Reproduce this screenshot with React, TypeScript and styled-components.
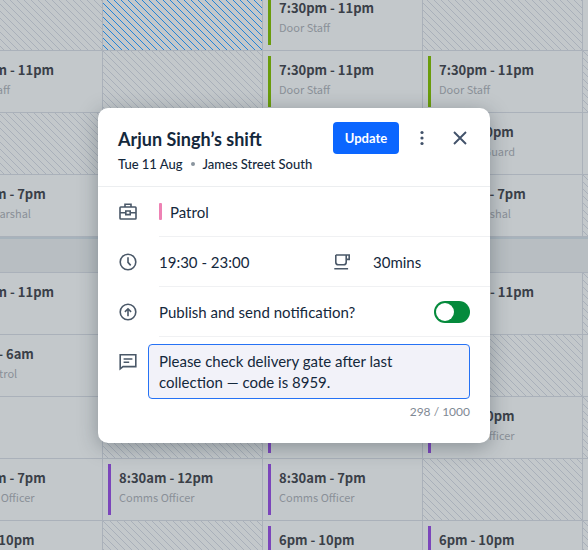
import React, { useState } from "react";
import styled, { createGlobalStyle } from "styled-components";

const GlobalStyle = createGlobalStyle`
  *, *::before, *::after { box-sizing: border-box; }
  html, body, #root { height: 100%; }
  body {
    margin: 0;
    overflow: hidden;
    background: #c3c8cd;
    font-family: Lato, sans-serif;
    color: #14283c;
  }
`;

const COLORS = { green: "#6a9c0c", purple: "#7b45bb" };

type ShiftData = {
  time: string;
  role?: string;
  bar: keyof typeof COLORS;
};
type CellData = ShiftData | "off" | "selected" | "empty";

const shift = (time: string, role: string | undefined, bar: keyof typeof COLORS): ShiftData => ({ time, role, bar });

const UPPER: CellData[][] = [
  ["off", "selected", shift("7:30pm - 11pm", "Door Staff", "green"), "off", "empty"],
  [shift("7:30pm - 11pm", "Door Staff", "green"), "off", shift("7:30pm - 11pm", "Door Staff", "green"), shift("7:30pm - 11pm", "Door Staff", "green"), "off"],
  ["off", "off", "empty", shift("6am - 10pm", "Security Guard", "green"), "empty"],
  [shift("8:30am - 7pm", "Event Marshal", "green"), "empty", "empty", shift("8:30am - 7pm", "Event Marshal", "green"), "off"],
];

const LOWER: CellData[][] = [
  [shift("7:30pm - 11pm", undefined, "purple"), "empty", "empty", shift("7:30pm - 11pm", undefined, "purple"), "off"],
  [shift("10pm - 6am", "Door Patrol", "purple"), "empty", "empty", "off", "empty"],
  ["empty", "off", shift("8:30am - 7pm", "Comms Officer", "purple"), shift("6pm - 10pm", "Comms Officer", "purple"), "off"],
  [shift("8:30am - 7pm", "Comms Officer", "purple"), shift("8:30am - 12pm", "Comms Officer", "purple"), shift("8:30am - 7pm", "Comms Officer", "purple"), "off", "empty"],
  [shift("6pm - 10pm", "Comms Officer", "purple"), "off", shift("6pm - 10pm", "Comms Officer", "purple"), shift("6pm - 10pm", "Comms Officer", "purple"), "off"],
];

const Page = styled.div`
  display: grid;
  grid-template-columns: minmax(0, 1fr);
  height: 100%;
  overflow: hidden;
  > * { grid-area: 1 / 1; }
`;

const Rota = styled.main`
  margin: -11px 0 0 -57px;
  width: max-content;
  font-family: "Noto Sans CJK SC", "Noto Sans", sans-serif;
`;

const RotaRow = styled.div`
  display: grid;
  grid-template-columns: repeat(5, 160px);
  height: 62px;
`;

const Divider = styled.div`
  height: 36px;
  background: #b8bec2;
  border-top: 2px solid #a7b3bc;
  border-bottom: 1px solid #aab1ba;
`;

const Cell = styled.div<{ $kind: "off" | "selected" | "plain" }>`
  display: flex;
  gap: 8px;
  padding: 5px;
  border-right: 1px solid #aab1ba;
  border-bottom: 1px solid #aab1ba;
  background-color: #c3c8cb;
  background-size: 7px 7px;
  background-image: ${({ $kind }) => {
    if ($kind === "plain") return "none";
    const line = $kind === "selected" ? "#2384d8" : "#a9b0ba";
    return `linear-gradient(45deg, transparent 43%, ${line} 43% 57%, transparent 57%)`;
  }};
`;

const Bar = styled.span<{ $color: string }>`
  width: 3px;
  background: ${({ $color }) => $color};
`;

const ShiftText = styled.div`
  display: flex;
  flex-direction: column;
  padding-top: 4px;
  white-space: nowrap;
`;

const ShiftTime = styled.span`
  font-size: 13px;
  line-height: 20px;
  font-weight: 700;
  color: #3a3f48;
`;

const ShiftRole = styled.span`
  font-size: 11px;
  line-height: 18px;
  color: #8a9098;
`;

const Modal = styled.section`
  place-self: start center;
  width: calc(100% - 196px);
  min-width: 392px;
  margin-top: 108px;
  padding-bottom: 21px;
  border-radius: 10px;
  background: #fff;
  box-shadow: 0 4px 20px rgba(30, 40, 50, 0.35);
  z-index: 1;
`;

const Header = styled.header`
  display: flex;
  align-items: flex-start;
  padding: 14px 20px 12px;
  border-bottom: 1px solid #eceef0;
`;

const Heading = styled.div`
  flex: 1;
  padding-top: 3px;
  white-space: nowrap;
`;

const Title = styled.h1`
  margin: 0 0 1px;
  font-size: 18px;
  line-height: 28px;
  font-weight: 700;
`;

const Meta = styled.p`
  display: flex;
  align-items: center;
  gap: 8px;
  margin: 0;
  font-size: 13px;
  line-height: 20px;
  font-weight: 500;
`;

const Dot = styled.span`
  width: 4px;
  height: 4px;
  border-radius: 50%;
  background: #8a949e;
`;

const UpdateButton = styled.button`
  width: 66px;
  height: 32px;
  padding: 0;
  border: 0;
  border-radius: 4px;
  background: #0b66ff;
  color: #fff;
  font: 700 13px/20px Lato, sans-serif;
`;

const IconButton = styled.button`
  display: grid;
  place-items: center;
  width: 28px;
  height: 32px;
  padding: 0;
  border: 0;
  background: none;
  color: #42526a;
`;

const Actions = styled.div`
  display: flex;
  gap: 10px;
  margin-right: -5px;
`;

const Row = styled.div`
  display: grid;
  grid-template-columns: 41px 1fr;
  padding-left: 20px;
  color: #4a5868;
`;

const RowIcon = styled.span`
  display: flex;
  align-items: center;
`;

const RowBody = styled.div`
  display: flex;
  align-items: center;
  height: 50px;
  padding-right: 20px;
  border-bottom: 1px solid #f0f1f3;
  font-size: 15px;
  line-height: 22px;
  color: #14283c;
`;

const RoleMark = styled.span`
  width: 3px;
  height: 17px;
  margin-right: 8px;
  border-radius: 1px;
  background: #ee82b4;
`;

const Half = styled.div`
  display: flex;
  align-items: center;
  flex: 173 1 0;
  gap: 21px;
  color: #14283c;
  svg { color: #4a5868; }
  & + & { flex-grow: 138; }
`;

const ToggleLabel = styled.label`
  flex: 1;
`;

const Toggle = styled.input`
  appearance: none;
  display: flex;
  width: 36px;
  height: 22px;
  margin: 0;
  padding: 2px;
  border-radius: 11px;
  background: #058a3c;
  &::before {
    content: "";
    width: 18px;
    height: 18px;
    border-radius: 50%;
    background: #fff;
  }
  &:not(:checked) {
    justify-content: flex-end;
    background: #8a949e;
  }
`;

const NoteRow = styled.div`
  display: grid;
  grid-template-columns: 30px 1fr;
  padding: 7px 20px 0;
  color: #4a5868;
  > svg { margin-top: 8px; }
`;

const NoteField = styled.div`
  display: flex;
  flex-direction: column;
`;

const Note = styled.textarea`
  display: block;
  width: 100%;
  height: 55px;
  padding: 6px 10px;
  border: 1px solid #2672f5;
  border-radius: 4px;
  outline: 0;
  resize: none;
  overflow: hidden;
  background: #f2f2f9;
  color: #14283c;
  font: 400 15px/21px Lato, sans-serif;
`;

const Counter = styled.span`
  align-self: flex-end;
  padding-top: 3px;
  font-size: 12px;
  line-height: 20px;
  color: #7f8994;
`;

const Svg = ({ children }: { children: React.ReactNode }) => (
  <svg width="20" height="20" viewBox="0 0 20 20" fill="none" stroke="currentColor" strokeWidth="1.6" aria-hidden="true">
    {children}
  </svg>
);

const BriefcaseIcon = () => (
  <Svg>
    <rect x="2" y="5" width="16" height="12" rx="0.8" />
    <path d="M7 5V2.2h6V5M2 10.8h5.6M12.4 10.8H18M7.8 9h4.4v3.6H7.8z" />
  </Svg>
);

const ClockIcon = () => (
  <Svg>
    <circle cx="10" cy="10" r="7.8" />
    <path d="M10 5.3v5.1l2.7 3" />
  </Svg>
);

const PublishIcon = () => (
  <Svg>
    <circle cx="10" cy="10" r="7.8" />
    <path d="M10 14.2V6.8M6.9 9.9 10 6.8l3.1 3.1" />
  </Svg>
);

const CupIcon = () => (
  <Svg>
    <path d="M3.8 3h13.4v4.4h-3M3.8 3v7.2q0 2.6 2.6 2.6h5.2q2.6 0 2.6-2.6V3M2.3 16.7h13.8" />
  </Svg>
);

const NoteIcon = () => (
  <Svg>
    <path d="M2.2 2.8h15.6v11.8H5l-2.8 2.3zM5.6 7h8.8M5.6 10.2h5.6" />
  </Svg>
);

const isShift = (cell: CellData): cell is ShiftData => typeof cell === "object";

const RotaRows = ({ rows }: { rows: CellData[][] }) => (
  <>
    {rows.map((row, r) => (
      <RotaRow key={r}>
        {row.map((cell, c) => (
          <Cell key={c} $kind={cell === "off" || cell === "selected" ? cell : "plain"}>
            {isShift(cell) && (
              <>
                <Bar $color={COLORS[cell.bar]} />
                <ShiftText>
                  <ShiftTime>{cell.time}</ShiftTime>
                  {cell.role && <ShiftRole>{cell.role}</ShiftRole>}
                </ShiftText>
              </>
            )}
          </Cell>
        ))}
      </RotaRow>
    ))}
  </>
);

export default function App() {
  const [publish, setPublish] = useState(true);
  const [note, setNote] = useState("Please check delivery gate after last collection — code is 8959.");

  return (
    <>
      <GlobalStyle />
      <Page>
        <Rota>
          <RotaRows rows={UPPER} />
          <Divider />
          <RotaRows rows={LOWER} />
        </Rota>
        <Modal role="dialog" aria-labelledby="shift-title">
          <Header>
            <Heading>
              <Title id="shift-title">Arjun Singh’s shift</Title>
              <Meta>
                Tue 11 Aug <Dot /> James Street South
              </Meta>
            </Heading>
            <Actions>
              <UpdateButton type="button">Update</UpdateButton>
              <IconButton type="button" aria-label="More options">
                <svg width="20" height="20" viewBox="0 0 20 20" fill="currentColor" aria-hidden="true">
                  <circle cx="9" cy="4.5" r="1.6" />
                  <circle cx="9" cy="10" r="1.6" />
                  <circle cx="9" cy="15.5" r="1.6" />
                </svg>
              </IconButton>
              <IconButton type="button" aria-label="Close">
                <svg width="20" height="20" viewBox="0 0 20 20" stroke="currentColor" strokeWidth="1.9" aria-hidden="true">
                  <path d="m3 4 12 12M15 4 3 16" />
                </svg>
              </IconButton>
            </Actions>
          </Header>
          <Row>
            <RowIcon><BriefcaseIcon /></RowIcon>
            <RowBody><RoleMark />Patrol</RowBody>
          </Row>
          <Row>
            <RowIcon><ClockIcon /></RowIcon>
            <RowBody>
              <Half>19:30 - 23:00</Half>
              <Half><CupIcon />30mins</Half>
            </RowBody>
          </Row>
          <Row>
            <RowIcon><PublishIcon /></RowIcon>
            <RowBody>
              <ToggleLabel htmlFor="publish">Publish and send notification?</ToggleLabel>
              <Toggle id="publish" type="checkbox" role="switch" checked={publish} onChange={(e) => setPublish(e.target.checked)} />
            </RowBody>
          </Row>
          <NoteRow>
            <NoteIcon />
            <NoteField>
              <Note aria-label="Shift note" value={note} onChange={(e) => setNote(e.target.value)} />
              <Counter>298 / 1000</Counter>
            </NoteField>
          </NoteRow>
        </Modal>
      </Page>
    </>
  );
}
